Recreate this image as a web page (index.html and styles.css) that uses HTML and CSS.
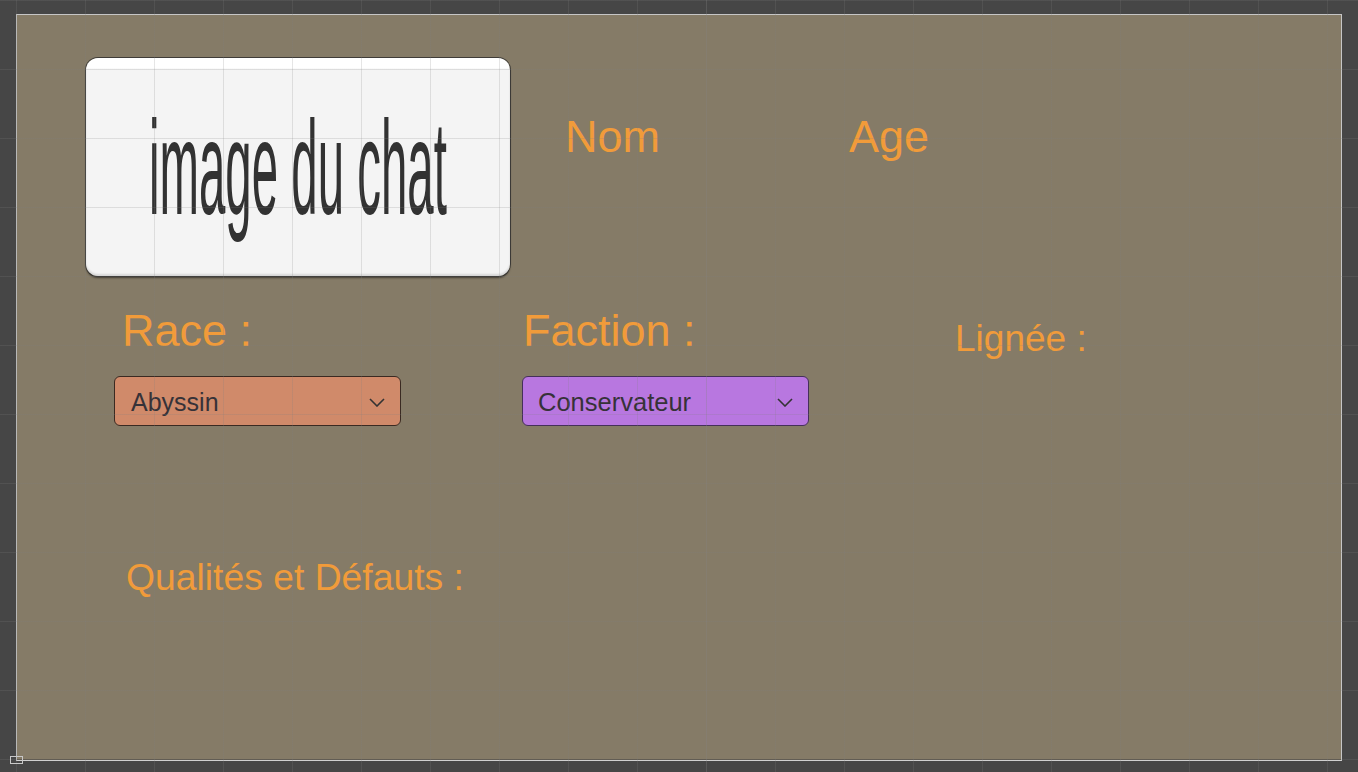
FILE: index.html
```html
<!DOCTYPE html>
<html lang="fr">
<head>
<meta charset="utf-8">
<title>Fiche du chat</title>
<link rel="stylesheet" href="styles.css">
</head>
<body>
<div class="scene">
  <div class="canvas">
    <div class="row-top">
      <div class="cat-image"><span class="cat-image-text">image du chat</span></div>
      <div class="label label-big label-nom">Nom</div>
      <div class="label label-big label-age">Age</div>
    </div>
    <div class="row-labels">
      <div class="label label-big label-race">Race :</div>
      <div class="label label-big label-faction">Faction :</div>
      <div class="label label-lignee">Lignée :</div>
    </div>
    <div class="row-dropdowns">
      <div class="dropdown dropdown-race">
        <span class="dropdown-text">Abyssin</span>
        <svg class="chevron" width="16" height="9" viewBox="0 0 16 9"><path d="M1 1 L8 8 L15 1" fill="none" stroke="#333" stroke-width="1.6"/></svg>
      </div>
      <div class="dropdown dropdown-faction">
        <span class="dropdown-text">Conservateur</span>
        <svg class="chevron" width="16" height="9" viewBox="0 0 16 9"><path d="M1 1 L8 8 L15 1" fill="none" stroke="#333" stroke-width="1.6"/></svg>
      </div>
    </div>
    <div class="row-qualites">
      <div class="label label-qualites">Qualités et Défauts :</div>
    </div>
  </div>
  <div class="grid-overlay"></div>
  <div class="grid-major"></div>
  <div class="pivot-handle"></div>
</div>
</body>
</html>
```
FILE: styles.css
```css
html, body {
  margin: 0;
  padding: 0;
}
body {
  font-family: "Liberation Sans", Arial, sans-serif;
  background: #464646;
}
.scene {
  position: relative;
  width: 1358px;
  height: 772px;
  box-sizing: border-box;
  padding: 14px 0 0 16px;
  background: #464646;
  overflow: hidden;
}
.canvas {
  width: 1326px;
  height: 747px;
  box-sizing: border-box;
  border: 1px solid #c6c6c6;
  border-bottom-color: #d0d0d0;
  background: #857b67;
  box-shadow: inset 0 -1px 0 #5a5448;
}
.label {
  color: #f19b3a;
  line-height: 1;
  white-space: nowrap;
}
.label-big {
  font-size: 45px;
}
.row-top {
  display: flex;
  align-items: flex-start;
  margin-top: 43px;
  padding-left: 69px;
}
.cat-image {
  width: 424px;
  height: 218px;
  box-sizing: border-box;
  border-radius: 12px;
  background: linear-gradient(#ffffff 0, #ffffff 10px, #f4f4f4 11px);
  box-shadow: 0 0 0 1px rgba(45, 45, 45, 0.8), 0 2px 2px rgba(0, 0, 0, 0.5), inset 0 -2px 2px rgba(0, 0, 0, 0.12);
  display: flex;
  align-items: center;
  justify-content: center;
}
.cat-image-text {
  display: inline-block;
  font-size: 134px;
  line-height: 1;
  color: #323232;
  white-space: nowrap;
  transform: scaleX(0.354);
  margin-top: 2px;
}
.label-nom {
  margin-left: 55px;
  margin-top: 56px;
  width: 284px;
}
.label-age {
  margin-top: 56px;
}
.row-labels {
  display: flex;
  align-items: flex-start;
  margin-top: 32px;
  padding-left: 105px;
}
.label-race {
  width: 401px;
}
.label-faction {
  width: 432px;
}
.label-lignee {
  font-size: 37px;
  margin-top: 12px;
}
.row-dropdowns {
  display: flex;
  margin-top: 19px;
  padding-left: 97px;
  gap: 121px;
}
.dropdown {
  width: 287px;
  height: 50px;
  box-sizing: border-box;
  border-radius: 6px;
  border: 1px solid #3a2a22;
  display: flex;
  align-items: center;
  justify-content: space-between;
  padding: 3px 15px 0 16px;
}
.dropdown-race {
  background: #d08a6a;
}
.dropdown-faction {
  background: #b877e0;
  border-color: #45305a;
  padding-left: 15px;
}
.dropdown-text {
  font-size: 25px;
  line-height: 1;
  color: #363238;
}
.dropdown-faction .dropdown-text {
  font-size: 25.5px;
}
.chevron {
  display: block;
  margin-bottom: 1px;
}
.row-qualites {
  margin-top: 133px;
  padding-left: 109px;
}
.label-qualites {
  font-size: 37.3px;
}
.grid-overlay {
  position: absolute;
  left: 0;
  top: 0;
  width: 1358px;
  height: 772px;
  pointer-events: none;
  background-image:
    linear-gradient(to right, rgba(128, 128, 128, 0.2) 0, rgba(128, 128, 128, 0.2) 1px, transparent 1px),
    linear-gradient(to bottom, rgba(128, 128, 128, 0.2) 0, rgba(128, 128, 128, 0.2) 1px, transparent 1px);
  background-size: 69px 100%, 100% 69px;
  background-position: 16px 0, 0 0;
}
.grid-major {
  position: absolute;
  left: 706px;
  top: 0;
  width: 1px;
  height: 772px;
  background: rgba(140, 140, 140, 0.12);
  pointer-events: none;
}
.pivot-handle {
  position: absolute;
  left: 10px;
  top: 756px;
  width: 13px;
  height: 8px;
  box-sizing: border-box;
  border: 1px solid #c8c8c8;
}
```
